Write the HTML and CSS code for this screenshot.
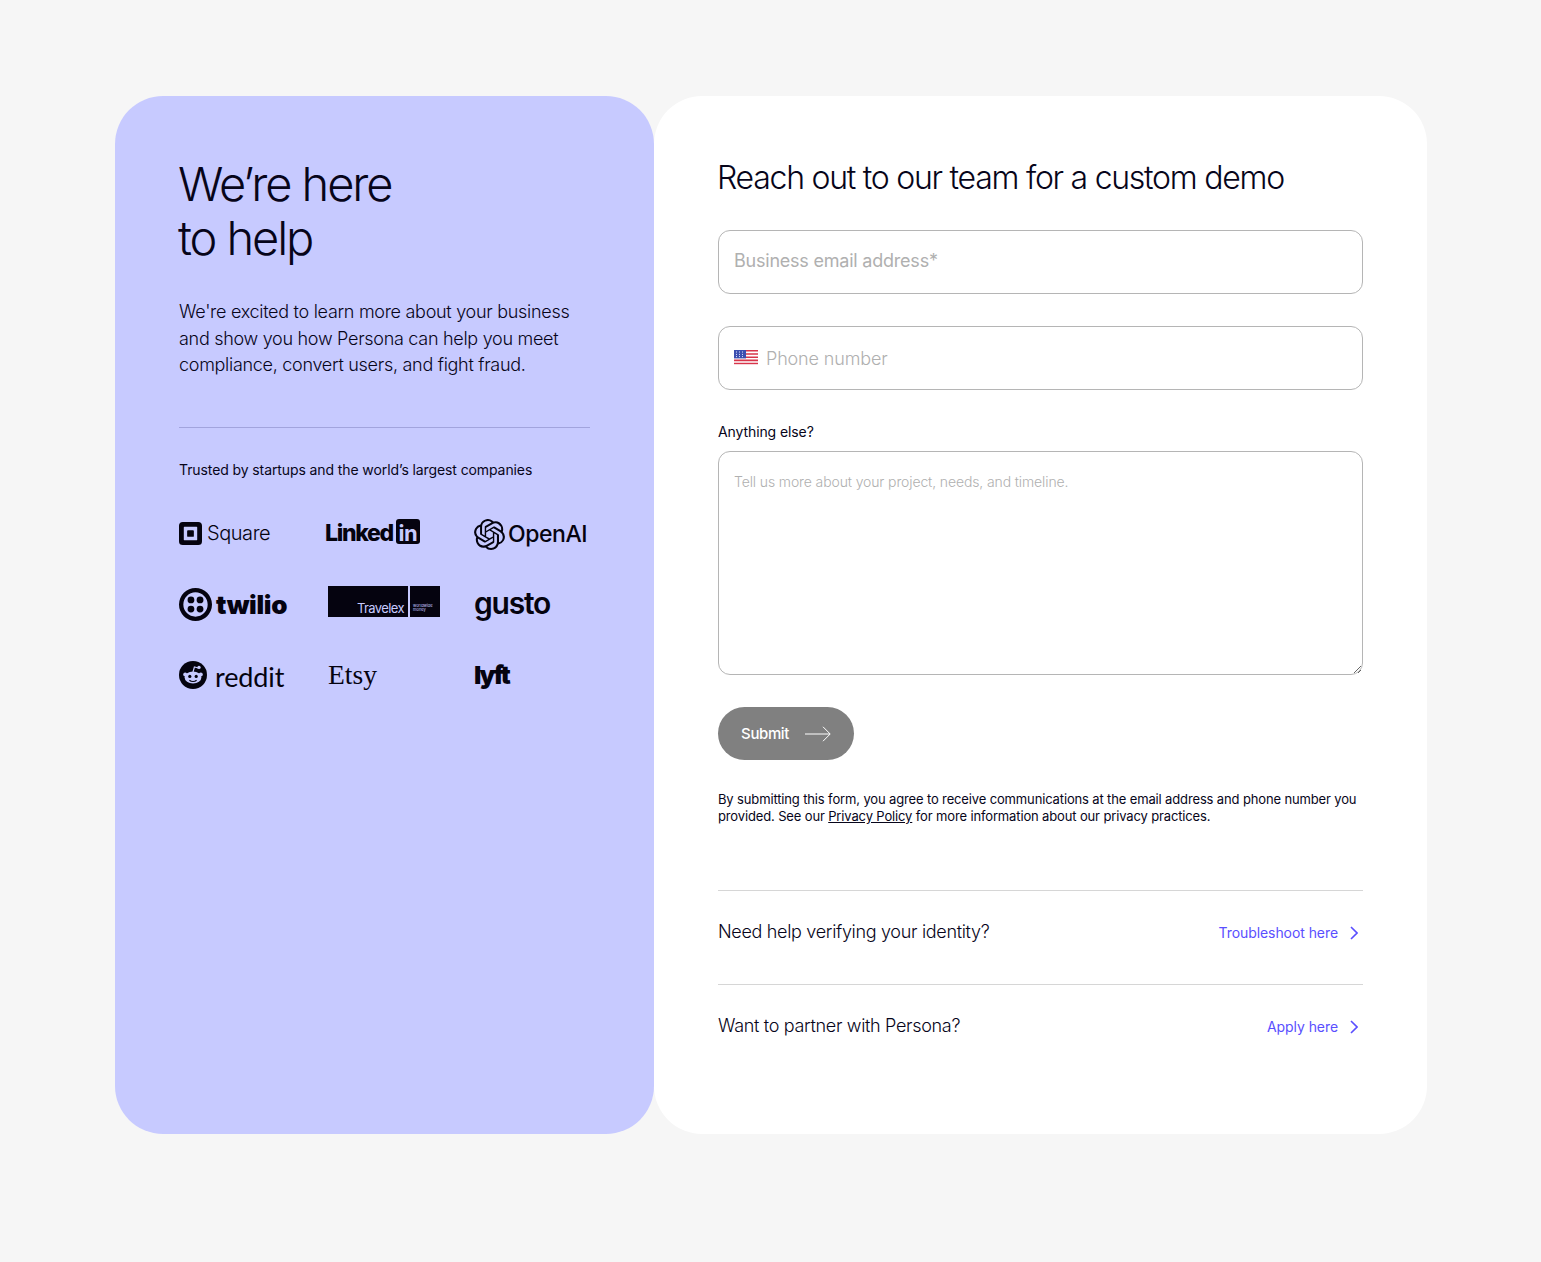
FILE: index.html
```html
<!DOCTYPE html>
<html lang="en">
<head>
<meta charset="utf-8">
<title>Contact Persona</title>
<link rel="stylesheet" href="styles.css">
</head>
<body>
<main class="page">
  <section class="intro">
    <h1 class="intro-title">We’re here<br>to help</h1>
    <p class="intro-copy">We're excited to learn more about your business and show you how Persona can help you meet compliance, convert users, and fight fraud.</p>
    <hr class="intro-rule">
    <p class="trusted">Trusted by startups and the world’s largest companies</p>
    <div class="logos">
      <div class="logo">
        <svg class="ico-square" viewBox="0 0 24 24"><path fill-rule="evenodd" d="M4 0h16a4 4 0 0 1 4 4v16a4 4 0 0 1-4 4H4a4 4 0 0 1-4-4V4a4 4 0 0 1 4-4zm1.5 5a.5.5 0 0 0-.5.5v13a.5.5 0 0 0 .5.5h13a.5.5 0 0 0 .5-.5v-13a.5.5 0 0 0-.5-.5z"/><rect x="8.5" y="8.5" width="7" height="7" rx="1"/></svg>
        <span class="t-square">Square</span>
      </div>
      <div class="logo">
        <span class="t-linked">Linked</span>
        <span class="in-box">in</span>
      </div>
      <div class="logo logo-openai">
        <svg class="ico-openai" viewBox="0 0 24 24"><path d="M22.2819 9.8211a5.9847 5.9847 0 0 0-.5157-4.9108 6.0462 6.0462 0 0 0-6.5098-2.9A6.0651 6.0651 0 0 0 4.9807 4.1818a5.9847 5.9847 0 0 0-3.9977 2.9 6.0462 6.0462 0 0 0 .7427 7.0966 5.98 5.98 0 0 0 .511 4.9107 6.051 6.051 0 0 0 6.5146 2.9001A5.9847 5.9847 0 0 0 13.2599 24a6.0557 6.0557 0 0 0 5.7718-4.2058 5.9894 5.9894 0 0 0 3.9977-2.9001 6.0557 6.0557 0 0 0-.7475-7.0729zm-9.022 12.6081a4.4755 4.4755 0 0 1-2.8764-1.0408l.1419-.0804 4.7783-2.7582a.7948.7948 0 0 0 .3927-.6813v-6.7369l2.02 1.1686a.071.071 0 0 1 .038.052v5.5826a4.504 4.504 0 0 1-4.4945 4.4944zm-9.6607-4.1254a4.4708 4.4708 0 0 1-.5346-3.0137l.142.0852 4.783 2.7582a.7712.7712 0 0 0 .7806 0l5.8428-3.3685v2.3324a.0804.0804 0 0 1-.0332.0615L9.74 19.9502a4.4992 4.4992 0 0 1-6.1408-1.6464zM2.3408 7.8956a4.485 4.485 0 0 1 2.3655-1.9728V11.6a.7664.7664 0 0 0 .3879.6765l5.8144 3.3543-2.0201 1.1685a.0757.0757 0 0 1-.071 0l-4.8303-2.7865A4.504 4.504 0 0 1 2.3408 7.872zm16.5963 3.8558L13.1038 8.364 15.1192 7.2a.0757.0757 0 0 1 .071 0l4.8303 2.7913a4.4944 4.4944 0 0 1-.6765 8.1042v-5.6772a.79.79 0 0 0-.407-.667zm2.0107-3.0231l-.142-.0852-4.7735-2.7818a.7759.7759 0 0 0-.7854 0L9.409 9.2297V6.8974a.0662.0662 0 0 1 .0284-.0615l4.8303-2.7866a4.4992 4.4992 0 0 1 6.6802 4.66zM8.3065 12.863l-2.02-1.1638a.0804.0804 0 0 1-.038-.0567V6.0742a4.4992 4.4992 0 0 1 7.3757-3.4537l-.142.0805L8.704 5.459a.7948.7948 0 0 0-.3927.6813zm1.0976-2.3654l2.602-1.4998 2.6069 1.4998v2.9994l-2.5974 1.4997-2.6067-1.4997Z"/></svg>
        <span class="t-openai">OpenAI</span>
      </div>
      <div class="logo">
        <svg class="ico-twilio" viewBox="0 0 32 32"><path fill-rule="evenodd" d="M16 0a16 16 0 1 1 0 32 16 16 0 0 1 0-32zm0 4.2a11.8 11.8 0 1 0 0 23.6 11.8 11.8 0 0 0 0-23.6z"/><circle cx="11.6" cy="11.6" r="3.3"/><circle cx="20.4" cy="11.6" r="3.3"/><circle cx="11.6" cy="20.4" r="3.3"/><circle cx="20.4" cy="20.4" r="3.3"/></svg>
        <span class="t-twilio">twilio</span>
      </div>
      <div class="logo">
        <div class="travelex">
          <span class="travelex-main">Travelex</span>
          <span class="travelex-side">worldwide money</span>
        </div>
      </div>
      <div class="logo"><span class="t-gusto">gusto</span></div>
      <div class="logo">
        <svg class="ico-reddit" viewBox="0 0 28 28"><circle cx="14" cy="14" r="14"/><g class="reddit-face"><ellipse cx="14" cy="16.6" rx="8.4" ry="6"/><circle cx="6.2" cy="13.6" r="2"/><circle cx="21.8" cy="13.6" r="2"/><circle cx="20" cy="6.4" r="1.7"/><path d="M14 11l1.4-5 4 1" class="reddit-stalk"/></g><circle cx="10.8" cy="15.4" r="1.6"/><circle cx="17.2" cy="15.4" r="1.6"/><path d="M10.4 19.2c2 1.6 5.2 1.6 7.2 0" class="reddit-smile"/></svg>
        <span class="t-reddit">reddit</span>
      </div>
      <div class="logo"><span class="t-etsy">Etsy</span></div>
      <div class="logo"><span class="t-lyft">lyft</span></div>
    </div>
  </section>

  <section class="panel">
    <h2 class="panel-title">Reach out to our team for a custom demo</h2>
    <form class="form">
      <input class="field field-email" type="email" placeholder="Business email address*">
      <div class="phone">
        <svg class="flag" viewBox="0 0 24 16"><rect width="24" height="16" fill="#fff"/><path d="M0 0h24v1.6H0zM0 3.2h24v1.6H0zM0 6.4h24V8H0zM0 9.6h24v1.6H0zM0 12.8h24v1.6H0z" fill="#d8354a"/><rect y="14.4" width="24" height="1.6" fill="#fff"/><rect width="12" height="8.4" fill="#3c4fb0"/><path d="M2 2h1M5 2h1M8 2h1M2 4.4h1M5 4.4h1M8 4.4h1M2 6.6h1M5 6.6h1M8 6.6h1" stroke="#dfe4fb" stroke-width="1"/></svg>
        <input class="phone-input" type="tel" placeholder="Phone number">
      </div>
      <label class="label" for="more">Anything else?</label>
      <textarea class="area" id="more" placeholder="Tell us more about your project, needs, and timeline."></textarea>
      <button class="submit" type="button">
        <span>Submit</span>
        <svg class="submit-arrow" viewBox="0 0 26 16"><path d="M0 8h25M18 .8 25.2 8 18 15.2"/></svg>
      </button>
      <p class="legal">By submitting this form, you agree to receive communications at the email address and phone number you provided. See our <a href="#">Privacy Policy</a> for more information about our privacy practices.</p>
    </form>
    <div class="help help-first">
      <span class="help-q">Need help verifying your identity?</span>
      <a class="help-link" href="#">Troubleshoot here <svg class="chev" viewBox="0 0 8 14"><path d="M1 1l6 6-6 6"/></svg></a>
    </div>
    <div class="help">
      <span class="help-q">Want to partner with Persona?</span>
      <a class="help-link" href="#">Apply here <svg class="chev" viewBox="0 0 8 14"><path d="M1 1l6 6-6 6"/></svg></a>
    </div>
  </section>
</main>
</body>
</html>
```
FILE: styles.css
```css
* { box-sizing: border-box; }
html, body { margin: 0; padding: 0; }
body {
  background: #f6f6f6;
  color: #07051a;
  font-family: Inter, "Liberation Sans", sans-serif;
  font-weight: 300;
}
.page {
  display: flex;
  width: 1312px;
  margin-left: 115px;
  padding: 96px 0 128px;
}
.intro {
  width: 539px;
  height: 1038px;
  padding: 61px 64px 0;
  background: #c7caff;
  border-radius: 48px;
}
.intro-title {
  margin: 0 0 0 -1px;
  font-size: 47px;
  line-height: 54px;
  font-weight: 300;
  letter-spacing: -2.1px;
}
.intro-copy {
  margin: 34px 0 0;
  font-size: 18px;
  line-height: 26.5px;
  letter-spacing: -.29px;
}
.intro-rule {
  margin: 48px 0 0;
  border: 0;
  border-top: 1px solid #a2a4dd;
}
.trusted {
  margin: 33px 0 0;
  font-size: 14px;
  line-height: 17px;
  font-weight: 400;
  letter-spacing: -.1px;
}
.logos {
  display: grid;
  grid-template-columns: 146px 149px 1fr;
  grid-auto-rows: 71px;
  margin-top: 20px;
}
.logo {
  display: flex;
  align-items: center;
  color: #05030f;
}
.logo-openai { padding-top: 2px; }
.logo svg { fill: currentColor; flex: none; }
.ico-square { width: 23px; height: 23px; margin-right: 5px; }
.t-square { font: 300 20px Inter, sans-serif; letter-spacing: -.45px; }
.t-linked { font: 800 23px "Inter", sans-serif; letter-spacing: -1.3px; }
.in-box {
  width: 24px;
  height: 25px;
  margin-left: 3px;
  margin-top: -3px;
  background: #05030f;
  border-radius: 3px;
  color: #c7caff;
  font: 700 22px/28px Inter, sans-serif;
  text-align: center;
  letter-spacing: -.5px;
}
.ico-openai { width: 31px; height: 31px; margin-right: 3px; }
.t-openai { font: 500 23px Inter, sans-serif; letter-spacing: -.45px; }
.ico-twilio { width: 33px; height: 33px; margin-right: 4px; }
.t-twilio { font: 900 26px Inter, sans-serif; letter-spacing: -.35px; }
.travelex {
  display: flex;
  gap: 2px;
  width: 112px;
  height: 31px;
  margin-left: 3px;
  margin-top: -6px;
}
.travelex-main {
  width: 80px;
  background: #05030f;
  color: #c7caff;
  font: 400 13px/1 Inter, sans-serif;
  letter-spacing: -.6px;
  text-align: right;
  padding: 16px 4px 0 0;
}
.travelex-side {
  flex: 1;
  background: #05030f;
  color: #c7caff;
  font: 400 4px/4px Inter, sans-serif;
  padding: 18px 2px 0 3px;
}
.t-gusto { font: 600 30px Inter, sans-serif; letter-spacing: -1.2px; margin-top: -3px; }
.ico-reddit { width: 28px; height: 28px; margin-right: 8px; }
.ico-reddit .reddit-face { fill: #c7caff; }
.reddit-stalk { fill: none; stroke: #c7caff; stroke-width: 1.2; }
.reddit-smile { fill: none; stroke: #05030f; stroke-width: 1.2; }
.t-reddit { font: 400 27px Lato, sans-serif; letter-spacing: -.1px; padding-top: 2px; }
.t-etsy { font: 400 27.5px "Liberation Serif", serif; margin-left: 3px; }
.t-lyft { font: 900 25px Inter, sans-serif; letter-spacing: -2.2px; }

.panel {
  width: 773px;
  height: 1038px;
  padding: 62px 64px 0;
  background: #fff;
  border-radius: 48px;
}
.panel-title {
  margin: 0 0 0 -1px;
  font-size: 32px;
  line-height: 39px;
  font-weight: 300;
  letter-spacing: -1.26px;
}
.form { display: flex; flex-direction: column; margin-top: 33px; }
.field, .phone, .area {
  width: 100%;
  border: 1px solid #b5b5b5;
  border-radius: 12px;
  background: #fff;
  font-family: inherit;
  font-weight: 300;
  color: #07051a;
  outline: none;
}
.field {
  height: 64px;
  padding: 0 15px 3px;
  font-size: 18px;
  font-weight: 400;
  letter-spacing: -.22px;
}
.field::placeholder, .phone-input::placeholder { color: #b0b0b0; opacity: 1; }
.phone {
  display: flex;
  align-items: center;
  height: 64px;
  margin-top: 32px;
  padding: 0 15px;
}
.flag { width: 24px; height: 16px; flex: none; margin-right: 8px; }
.phone-input {
  flex: 1;
  border: 0;
  padding: 0;
  outline: none;
  background: transparent;
  font-family: inherit;
  font-weight: 300;
  font-size: 18px;
  letter-spacing: -.15px;
}
.label {
  margin-top: 33px;
  font-size: 14px;
  line-height: 18px;
  font-weight: 400;
  letter-spacing: -.1px;
}
.area {
  height: 224px;
  margin-top: 10px;
  padding: 21px 15px;
  font-size: 14px;
  line-height: 18px;
  letter-spacing: -.12px;
}
.area::placeholder { color: #b0b0b0; opacity: 1; }
.submit {
  display: flex;
  align-items: center;
  justify-content: center;
  gap: 16px;
  align-self: flex-start;
  width: 136px;
  height: 53px;
  margin-top: 32px;
  border: 0;
  border-radius: 27px;
  background: #808080;
  color: #fff;
  font-family: inherit;
  font-size: 15px;
  font-weight: 500;
  letter-spacing: -.4px;
}
.submit-arrow { width: 26px; height: 16px; fill: none !important; stroke: #fff; stroke-width: 1; }
.legal {
  margin: 31px 0 0;
  font-size: 13px;
  line-height: 17px;
  font-weight: 400;
  letter-spacing: -.14px;
}
.legal a { color: inherit; }
.help {
  display: flex;
  justify-content: space-between;
  align-items: center;
  height: 94px;
  border-top: 1px solid #d6d6d6;
  padding-bottom: 12px;
}
.help-first { margin-top: 65px; }
.help-q { font-size: 18px; letter-spacing: -.32px; }
.help-link {
  display: flex;
  align-items: center;
  gap: 12px;
  padding-right: 5px;
  color: #5a4fff;
  font-size: 14px;
  font-weight: 400;
  letter-spacing: -.07px;
  text-decoration: none;
  margin-top: 2px;
}
.chev { width: 8px; height: 14px; fill: none; stroke: #5a4fff; stroke-width: 1.6; }
```
